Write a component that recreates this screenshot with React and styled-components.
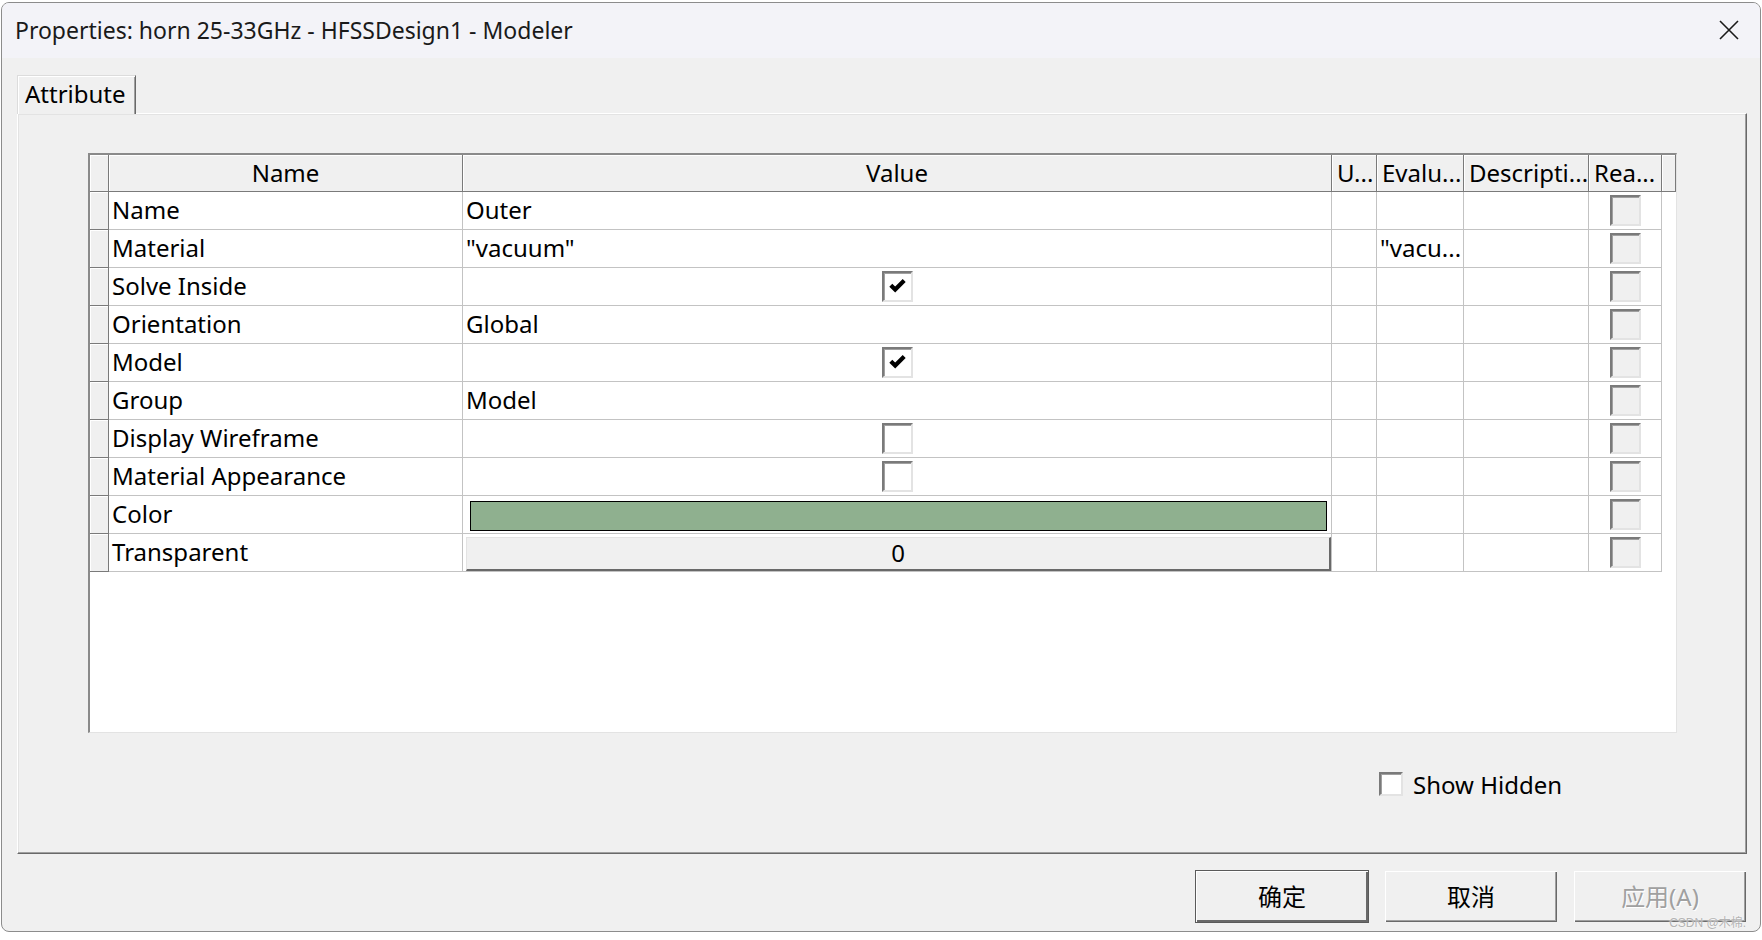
import React from 'react'
import styled, { createGlobalStyle } from 'styled-components'

const GlobalStyle = createGlobalStyle`
  html, body {
    margin: 0;
    padding: 0;
    background: #ffffff;
  }
  body {
    font-family: "Segoe UI", "Noto Sans", "Noto Sans CJK SC", sans-serif;
    color: #000000;
  }
  * {
    box-sizing: border-box;
  }
`

const Window = styled.div`
  width: 1760px;
  height: 930px;
  margin: 2px 0 0 1px;
  border: 1px solid #8c8c8c;
  border-radius: 8px;
  background: #f0f0f0;
  display: flex;
  flex-direction: column;
  overflow: hidden;
  position: relative;
`

const TitleBar = styled.div`
  height: 55px;
  flex: none;
  background: #f3f3f8;
  display: flex;
  align-items: center;
  justify-content: space-between;
  padding: 0 21px 2px 13px;
`

const Title = styled.div`
  font-size: 23px;
  color: #1a1a1a;
  white-space: nowrap;
`

const CloseButton = styled.div`
  width: 20px;
  height: 20px;
  display: flex;
  align-items: center;
  justify-content: center;
`

const Content = styled.div`
  flex: 1;
  display: flex;
  flex-direction: column;
  padding: 17px 13px 0 15px;
`

const TabStrip = styled.div`
  display: flex;
  height: 38px;
`

const Tab = styled.div`
  width: 119px;
  height: 39px;
  position: relative;
  z-index: 1;
  background: #f0f0f0;
  border-top: 1px solid #dcdcdc;
  border-left: 1px solid #dcdcdc;
  border-right: 1px solid #696969;
  box-shadow: inset 1px 1px #ffffff, inset -1px 0 #a0a0a0;
  font-size: 24px;
  padding: 0 0 3px 7px;
  display: flex;
  align-items: center;
`

const Panel = styled.div`
  height: 741px;
  flex: none;
  border-top: 1px solid #ffffff;
  border-left: 1px solid #ffffff;
  border-right: 1px solid #696969;
  border-bottom: 1px solid #696969;
  box-shadow: inset -1px -1px #a0a0a0, inset 1px 1px #e3e3e3;
  padding: 39px 0 0 70px;
  display: flex;
  flex-direction: column;
`

const Table = styled.div`
  width: 1589px;
  height: 580px;
  background: #ffffff;
  border-top: 2px solid #8a8a8a;
  border-left: 2px solid #8a8a8a;
  border-right: 1px solid #e3e3e3;
  border-bottom: 1px solid #e3e3e3;
  display: grid;
  grid-template-columns: 19px 354px 869px 45px 87px 125px 73px 14px;
  grid-auto-rows: 38px;
  grid-template-rows: 37px;
  align-content: start;
  font-size: 24px;
`

const HeadCell = styled.div`
  background: #f0f0f0;
  border-right: 1px solid #7a7a7a;
  border-bottom: 1px solid #7a7a7a;
  box-shadow: inset 1px 1px #ffffff;
  display: flex;
  align-items: center;
  justify-content: ${p => (p.$left ? 'flex-start' : 'center')};
  padding: 0 0 2px ${p => (p.$left ? '5px' : '0')};
  white-space: nowrap;
  overflow: hidden;
`

const SelectorCell = styled.div`
  background: #f0f0f0;
  border-right: 1px solid #7a7a7a;
  border-bottom: 1px solid #7a7a7a;
  box-shadow: inset 1px 1px #ffffff;
`

const Cell = styled.div`
  border-right: 1px solid #c3c3c3;
  border-bottom: 1px solid #c3c3c3;
  display: flex;
  align-items: center;
  justify-content: ${p => (p.$center ? 'center' : 'flex-start')};
  padding: ${p => p.$pad || '0 0 2px 3px'};
  white-space: nowrap;
  overflow: hidden;
`

const Filler = styled.div``

const Box = styled.div`
  width: ${p => p.$size}px;
  height: ${p => p.$size}px;
  flex: none;
  background: ${p => (p.$disabled ? '#f0f0f0' : '#ffffff')};
  border-top: 2px solid #7a7a7a;
  border-left: 2px solid #7a7a7a;
  border-right: 2px solid #e3e3e3;
  border-bottom: 2px solid #e3e3e3;
  box-shadow: inset 1px 1px #a0a0a0;
  display: flex;
  align-items: center;
  justify-content: center;
`

const Swatch = styled.div`
  flex: 1;
  align-self: stretch;
  background: ${p => p.$color};
  border: 1px solid #000000;
`

const SpinBox = styled.div`
  flex: 1;
  align-self: stretch;
  background: #f0f0f0;
  border-top: 1px solid #e3e3e3;
  border-left: 1px solid #e3e3e3;
  border-right: 2px solid #696969;
  border-bottom: 2px solid #696969;
  display: flex;
  align-items: center;
  justify-content: center;
  padding-bottom: 3px;
`

const ShowHiddenRow = styled.div`
  display: flex;
  align-items: center;
  gap: 10px;
  height: 34px;
  margin: 34px 0 0 1291px;
  font-size: 24px;
`

const ButtonRow = styled.div`
  display: flex;
  justify-content: flex-end;
  gap: 15px;
  margin-top: 16px;
`

const Button = styled.div`
  width: 174px;
  height: 53px;
  background: #f0f0f0;
  border: 1px solid ${p => (p.$default ? '#5a5a5a' : '#f0f0f0')};
  box-shadow: ${p =>
    p.$default
      ? 'inset 1px 1px #ffffff, inset -2px -2px #696969'
      : 'inset 1px 1px #ffffff, inset -1px -1px #696969, inset -2px -2px #a0a0a0'};
  display: flex;
  align-items: center;
  justify-content: center;
  font-size: 24px;
  padding-bottom: 2px;
  color: ${p => (p.$disabled ? '#a0a0a0' : '#000000')};
  text-shadow: ${p => (p.$disabled ? '1px 1px #ffffff' : 'none')};
`

const Watermark = styled.div`
  position: absolute;
  right: 14px;
  bottom: 1px;
  font-size: 12px;
  color: #b4b4b4;
  text-shadow: 0 0 2px #ffffff;
  font-family: "Liberation Sans", "Noto Sans CJK SC", sans-serif;
`

const rows = [
  { name: 'Name', kind: 'text', value: 'Outer' },
  { name: 'Material', kind: 'text', value: '"vacuum"', evaluated: '"vacu...' },
  { name: 'Solve Inside', kind: 'check', value: true },
  { name: 'Orientation', kind: 'text', value: 'Global' },
  { name: 'Model', kind: 'check', value: true },
  { name: 'Group', kind: 'text', value: 'Model' },
  { name: 'Display Wireframe', kind: 'check', value: false },
  { name: 'Material Appearance', kind: 'check', value: false },
  { name: 'Color', kind: 'color', value: '#8fb08f' },
  { name: 'Transparent', kind: 'spin', value: '0' },
]

function CheckMark() {
  return (
    <svg width="17" height="15" viewBox="0 0 17 15">
      <polyline
        points="1.8,6.2 6.2,10.6 15.2,1.6"
        fill="none"
        stroke="#000000"
        strokeWidth="4.2"
        strokeLinejoin="miter"
      />
    </svg>
  )
}

function CheckBox({ checked, disabled, size }) {
  return (
    <Box $size={size} $disabled={disabled}>
      {checked && <CheckMark />}
    </Box>
  )
}

function ValueCell({ row }) {
  if (row.kind === 'check') {
    return (
      <Cell $center $pad="0 0 1px 0">
        <CheckBox size={31} checked={row.value} />
      </Cell>
    )
  }
  if (row.kind === 'color') {
    return (
      <Cell $pad="5px 4px 2px 7px">
        <Swatch $color={row.value} />
      </Cell>
    )
  }
  if (row.kind === 'spin') {
    return (
      <Cell $pad="3px 0 0 3px">
        <SpinBox>{row.value}</SpinBox>
      </Cell>
    )
  }
  return <Cell>{row.value}</Cell>
}

export default function App() {
  return (
    <>
      <GlobalStyle />
      <Window>
        <TitleBar>
          <Title>Properties: horn 25-33GHz - HFSSDesign1 - Modeler</Title>
          <CloseButton>
            <svg width="20" height="20" viewBox="0 0 20 20">
              <path d="M1 1 L19 19 M19 1 L1 19" stroke="#1a1a1a" strokeWidth="1.6" />
            </svg>
          </CloseButton>
        </TitleBar>
        <Content>
          <TabStrip>
            <Tab>Attribute</Tab>
          </TabStrip>
          <Panel>
            <Table>
              <SelectorCell />
              <HeadCell>Name</HeadCell>
              <HeadCell>Value</HeadCell>
              <HeadCell $left>U...</HeadCell>
              <HeadCell $left>Evalu...</HeadCell>
              <HeadCell $left>Descripti...</HeadCell>
              <HeadCell $left>Rea...</HeadCell>
              <HeadCell />
              {rows.map(row => (
                <React.Fragment key={row.name}>
                  <SelectorCell />
                  <Cell>{row.name}</Cell>
                  <ValueCell row={row} />
                  <Cell />
                  <Cell>{row.evaluated || ''}</Cell>
                  <Cell />
                  <Cell $center $pad="0 0 1px 0">
                    <CheckBox size={31} disabled />
                  </Cell>
                  <Filler />
                </React.Fragment>
              ))}
            </Table>
            <ShowHiddenRow>
              <CheckBox size={24} />
              <span>Show Hidden</span>
            </ShowHiddenRow>
          </Panel>
          <ButtonRow>
            <Button $default>确定</Button>
            <Button>取消</Button>
            <Button $disabled>应用(A)</Button>
          </ButtonRow>
        </Content>
        <Watermark>CSDN @木棉.</Watermark>
      </Window>
    </>
  )
}
